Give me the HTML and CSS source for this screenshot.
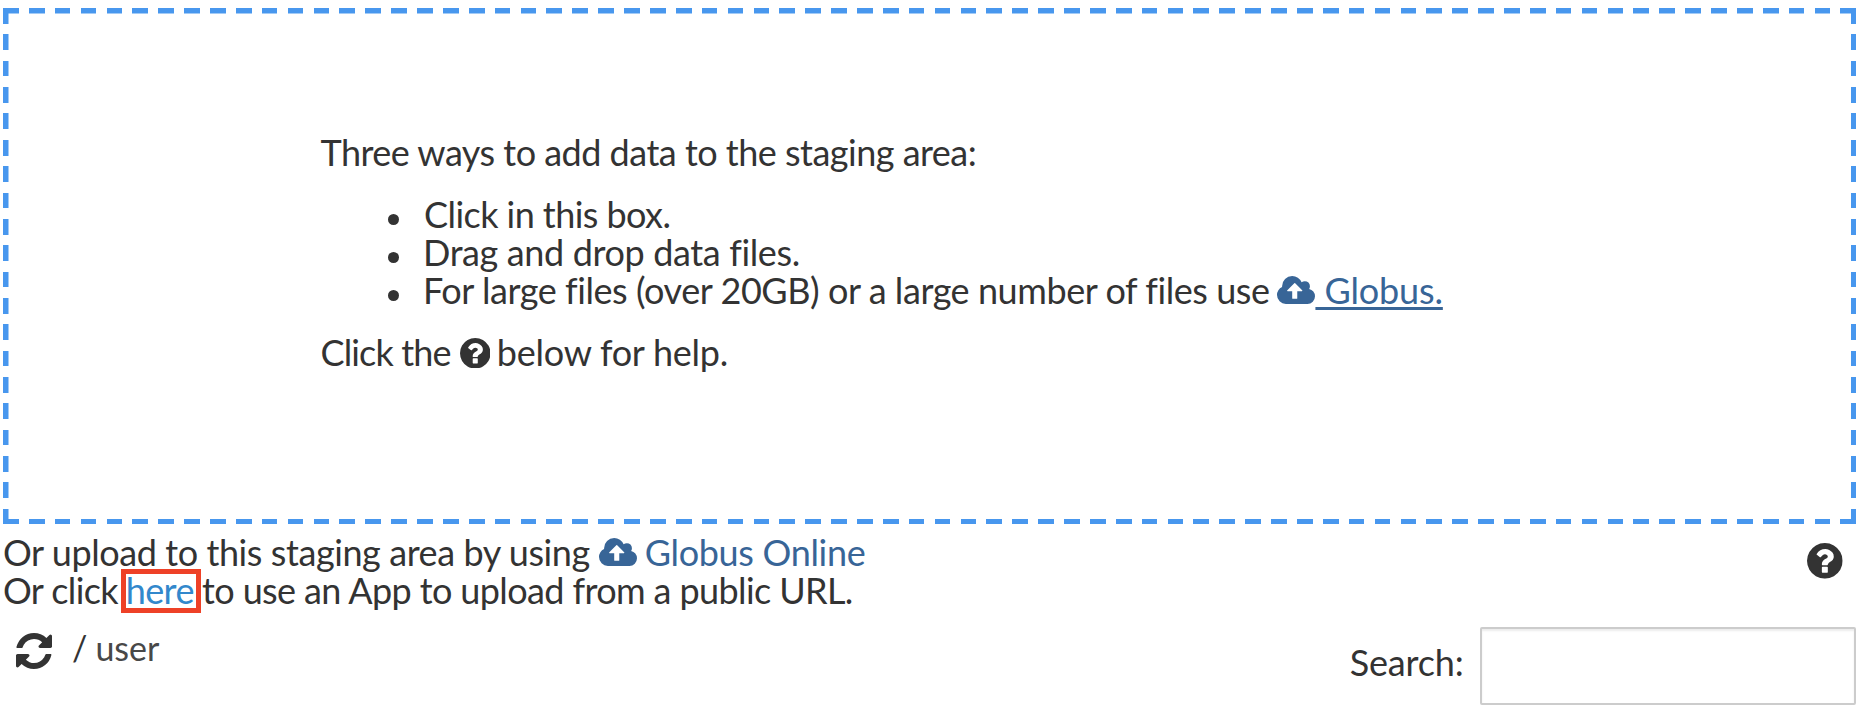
FILE: index.html
```
<!DOCTYPE html>
<html lang="en">
<head>
<meta charset="utf-8">
<title>Staging area</title>
<link rel="stylesheet" href="styles.css">
</head>
<body>
<svg class="defs" width="0" height="0" aria-hidden="true">
  <symbol id="cloud" viewBox="0 128 1920 1408"><path d="M1280 864q0-14-9-23l-352-352q-9-9-23-9t-23 9l-351 351q-10 12-10 24 0 14 9 23t23 9h224v352q0 13 9.5 22.5t22.5 9.5h192q13 0 22.5-9.5t9.5-22.5v-352h224q13 0 22.5-9.5t9.5-22.5zm640 288q0 159-112.5 271.5t-271.5 112.5h-1088q-185 0-316.5-131.5t-131.5-316.5q0-130 70-240t188-165q-2-30-2-43 0-212 150-362t362-150q156 0 285.5 87t188.5 231q71-62 166-62 106 0 181 75t75 181q0 76-41 138 130 31 213.5 135.5t83.5 238.5z"/></symbol>
  <symbol id="question" viewBox="128 128 1536 1536"><path d="M1024 1376v-192q0-14-9-23t-23-9h-192q-14 0-23 9t-9 23v192q0 14 9 23t23 9h192q14 0 23-9t9-23zm256-672q0-88-55.5-163t-138.5-116-170-41q-243 0-371 213-15 24 8 42l132 100q7 6 19 6 16 0 25-12 53-68 86-92 34-24 86-24 48 0 85.5 26t37.5 59q0 38-20 61t-68 45q-63 28-115.5 86.5t-52.5 125.5v36q0 14 9 23t23 9h192q14 0 23-9t9-23q0-19 21.5-49.5t54.5-49.5q32-18 49-28.5t46-35 44.5-48 28-60.5 12.5-81zm384 192q0 209-103 385.5t-279.5 279.5-385.5 103-385.5-103-279.5-279.5-103-385.5 103-385.5 279.5-279.5 385.5-103 385.5 103 279.5 279.5 103 385.5z"/></symbol>
  <symbol id="refresh" viewBox="128 128 1536 1536"><path d="M1639 1056q0 5-1 7-64 268-268 434.5t-478 166.5q-146 0-282.5-55t-243.5-157l-129 129q-19 19-45 19t-45-19-19-45v-448q0-26 19-45t45-19h448q26 0 45 19t19 45-19 45l-137 137q71 66 161 102t187 36q134 0 250-65t186-179q11-17 53-117 8-23 30-23h192q13 0 22.5 9.5t9.5 22.5zm25-800v448q0 26-19 45t-45 19h-448q-26 0-45-19t-19-45 19-45l138-138q-148-137-349-137-134 0-250 65t-186 179q-11 17-53 117-8 23-30 23h-199q-13 0-22.5-9.5t-9.5-22.5v-7q65-268 270-434.5t480-166.5q146 0 284 55.5t245 156.5l130-129q19-19 45-19t45 19 19 45z"/></symbol>
</svg>
<main class="page">
  <section class="dropzone">
    <p class="line intro"><span>Three ways to add data to the staging area:</span></p>
    <ul class="ways">
      <li class="line"><span class="way-click">Click in this box.</span></li>
      <li class="line"><span class="way-drag">Drag and drop data files.</span></li>
      <li class="line"><span class="way-large">For large files (over 20GB) or a large number of files use</span><svg class="cloud"><use href="#cloud"/></svg><a class="globus">&nbsp;Globus.</a></li>
    </ul>
    <p class="line help"><span class="help-a">Click the</span><svg class="help-icon"><use href="#question"/></svg><span class="help-b">below for help.</span></p>
  </section>
  <section class="options">
    <div>
      <p class="line"><span class="upload">Or upload to this staging area by using</span><svg class="cloud cloud-lower"><use href="#cloud"/></svg><a class="globus-online">Globus Online</a></p>
      <p class="line"><span class="or-click">Or click</span><a class="here">here</a><span class="to-use">to use an App to upload from a public URL.</span></p>
    </div>
    <svg class="question"><use href="#question"/></svg>
  </section>
  <section class="toolbar">
    <svg class="refresh"><use href="#refresh"/></svg>
    <span class="slash">/</span><span class="user">user</span>
    <label class="search" for="q">Search:</label>
    <input class="search-input" id="q" type="text">
  </section>
</main>
</body>
</html>
```
FILE: styles.css
```
* { box-sizing: border-box; }

body {
  margin: 0;
  background: #fff;
  color: #333;
  font: 36px/38.2px Lato, sans-serif;
  overflow: hidden;
}

p, ul { margin: 0; padding: 0; list-style: none; }
svg { fill: currentColor; flex: none; }
a { color: #386597; }
.defs { position: absolute; }
.page { padding: 7.5px 5px 0 3px; }

/* dashed frame: one gradient per side */
.dropzone {
  --c: #4897ee;
  height: 516.5px;
  padding: 125px 0 0 317.5px;
  background:
    repeating-linear-gradient(90deg, var(--c) 0 15.7px, transparent 15.7px 25.88px) 0 0 / 100% 5.5px no-repeat,
    repeating-linear-gradient(90deg, var(--c) 0 15.7px, transparent 15.7px 25.88px) 0 100% / 100% 5.5px no-repeat,
    repeating-linear-gradient(180deg, var(--c) 0 15.7px, transparent 15.7px 26.36px) 0 0 / 5.5px 100% no-repeat,
    repeating-linear-gradient(180deg, var(--c) 0 15.7px, transparent 15.7px 26.36px) 100% 0 / 5.5px 100% no-repeat;
}

.line {
  display: flex;
  align-items: baseline;
  height: 38.2px;
  white-space: nowrap;
}

.intro { letter-spacing: -.512px; margin-bottom: 24.2px; }
.ways { padding-left: 101.5px; }
.ways .line::before {
  content: "";
  align-self: flex-start;
  width: 11px;
  height: 11px;
  margin: 19px 24.5px 0 -34.5px;
  border-radius: 50%;
  background: #333;
}
.way-click { letter-spacing: -.556px; margin-left: 1px; }
.way-drag { letter-spacing: -.37px; }
.way-large { letter-spacing: -.44px; }
.cloud { width: 38px; height: 28px; margin-left: 7.9px; color: #386597; }
.cloud-lower { margin-left: 8.9px; }
.globus {
  letter-spacing: -.144px;
  text-decoration: underline;
  text-decoration-thickness: 3px;
  text-underline-offset: 3px;
}
.help { margin-top: 24px; }
.help-a { letter-spacing: -.859px; }
.help-icon { align-self: flex-start; width: 30.5px; height: 30.5px; margin: 4.5px 6.7px 0 9px; }
.help-b { letter-spacing: -.25px; }

.options { display: flex; justify-content: space-between; padding-top: 9px; }
.upload { letter-spacing: -.42px; }
.globus-online { letter-spacing: -.321px; margin-left: 8px; }
.or-click { letter-spacing: -.6px; }
.here {
  width: 80px;
  height: 44px;
  margin: -5px 1.5px 0 2.5px;
  padding-left: .2px;
  border: 5px solid #ee4127;
  line-height: 33px;
  letter-spacing: -.6px;
  color: #3288cc;
}
.to-use { letter-spacing: -.61px; }
.question { width: 35.7px; height: 35.7px; margin: 10px 13px 0 0; }

.toolbar { display: flex; align-items: flex-start; padding-top: 17.5px; }
.refresh { width: 36px; height: 36px; margin: 6.5px 20px 0 13px; }
.slash, .user { font-size: 34px; margin-top: 2.4px; }
.user { margin-left: 8px; letter-spacing: 0; color: #484848; }
.search { margin: 16.4px 16px 0 auto; letter-spacing: -.161px; }
.search-input {
  width: 376.5px;
  height: 78px;
  border: 2.5px solid #ccc;
  border-radius: 2px;
  background: #fff;
  box-shadow: inset 0 2px 2px rgba(0, 0, 0, .075);
}
```
